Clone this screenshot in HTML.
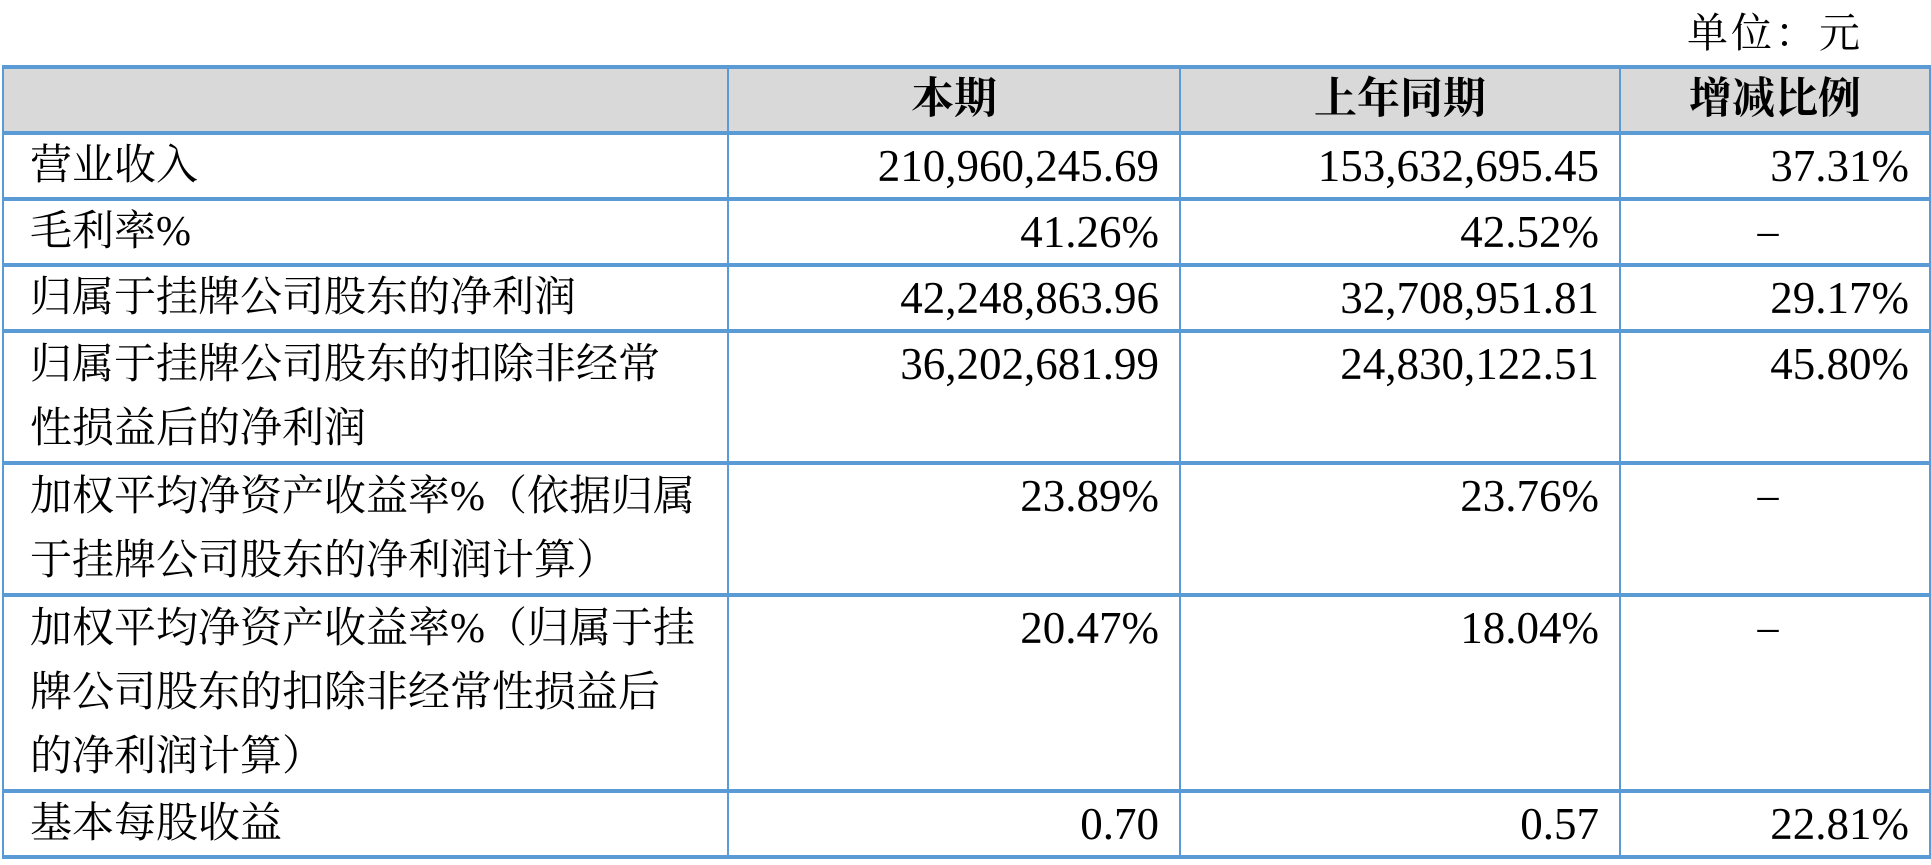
<!DOCTYPE html>
<html><head><meta charset="utf-8"><style>
body{margin:0;width:1931px;height:865px;background:#fff;position:relative;overflow:hidden;font-family:"Liberation Serif","Noto Serif CJK SC",serif;color:#000}
.unit{position:absolute;left:1687px;top:8px;font-size:41px;line-height:50px;letter-spacing:3px}
table{position:absolute;left:2px;top:65px;border-collapse:collapse;table-layout:fixed;width:1927px}
td{border-left:2px solid #5b9bd5;border-right:2px solid #5b9bd5;border-top:4px solid #5b9bd5;border-bottom:4px solid #5b9bd5;font-size:42px;line-height:62px;vertical-align:top;padding:0 20px 0 26px;box-sizing:border-box;overflow:hidden}
td.n{text-align:right;font-size:45px}
td.c{text-align:center;padding-right:40px}
tr.h td{background:#d9d9d9;font-weight:bold;text-align:center;font-size:43px;padding:0;vertical-align:middle}
</style></head><body>
<div class="unit">单位：元</div>
<table>
<colgroup><col style="width:725px"><col style="width:452px"><col style="width:440px"><col style="width:310px"></colgroup>
<tr class="h" style="height:64px"><td></td><td>本期</td><td>上年同期</td><td>增减比例</td></tr>
<tr style="height:63px"><td>营业收入</td><td class="n">210,960,245.69</td><td class="n">153,632,695.45</td><td class="n">37.31%</td></tr>
<tr style="height:63px"><td>毛利率%</td><td class="n">41.26%</td><td class="n">42.52%</td><td class="c">–</td></tr>
<tr style="height:63px"><td>归属于挂牌公司股东的净利润</td><td class="n">42,248,863.96</td><td class="n">32,708,951.81</td><td class="n">29.17%</td></tr>
<tr style="height:131px"><td style="line-height:64px">归属于挂牌公司股东的扣除非经常<br>性损益后的净利润</td><td class="n">36,202,681.99</td><td class="n">24,830,122.51</td><td class="n">45.80%</td></tr>
<tr style="height:131px"><td style="line-height:64px">加权平均净资产收益率%（依据归属<br>于挂牌公司股东的净利润计算）</td><td class="n">23.89%</td><td class="n">23.76%</td><td class="c">–</td></tr>
<tr style="height:192px"><td style="line-height:64px">加权平均净资产收益率%（归属于挂<br>牌公司股东的扣除非经常性损益后<br>的净利润计算）</td><td class="n">20.47%</td><td class="n">18.04%</td><td class="c">–</td></tr>
<tr style="height:66px"><td>基本每股收益</td><td class="n">0.70</td><td class="n">0.57</td><td class="n">22.81%</td></tr>
</table>
</body></html>
